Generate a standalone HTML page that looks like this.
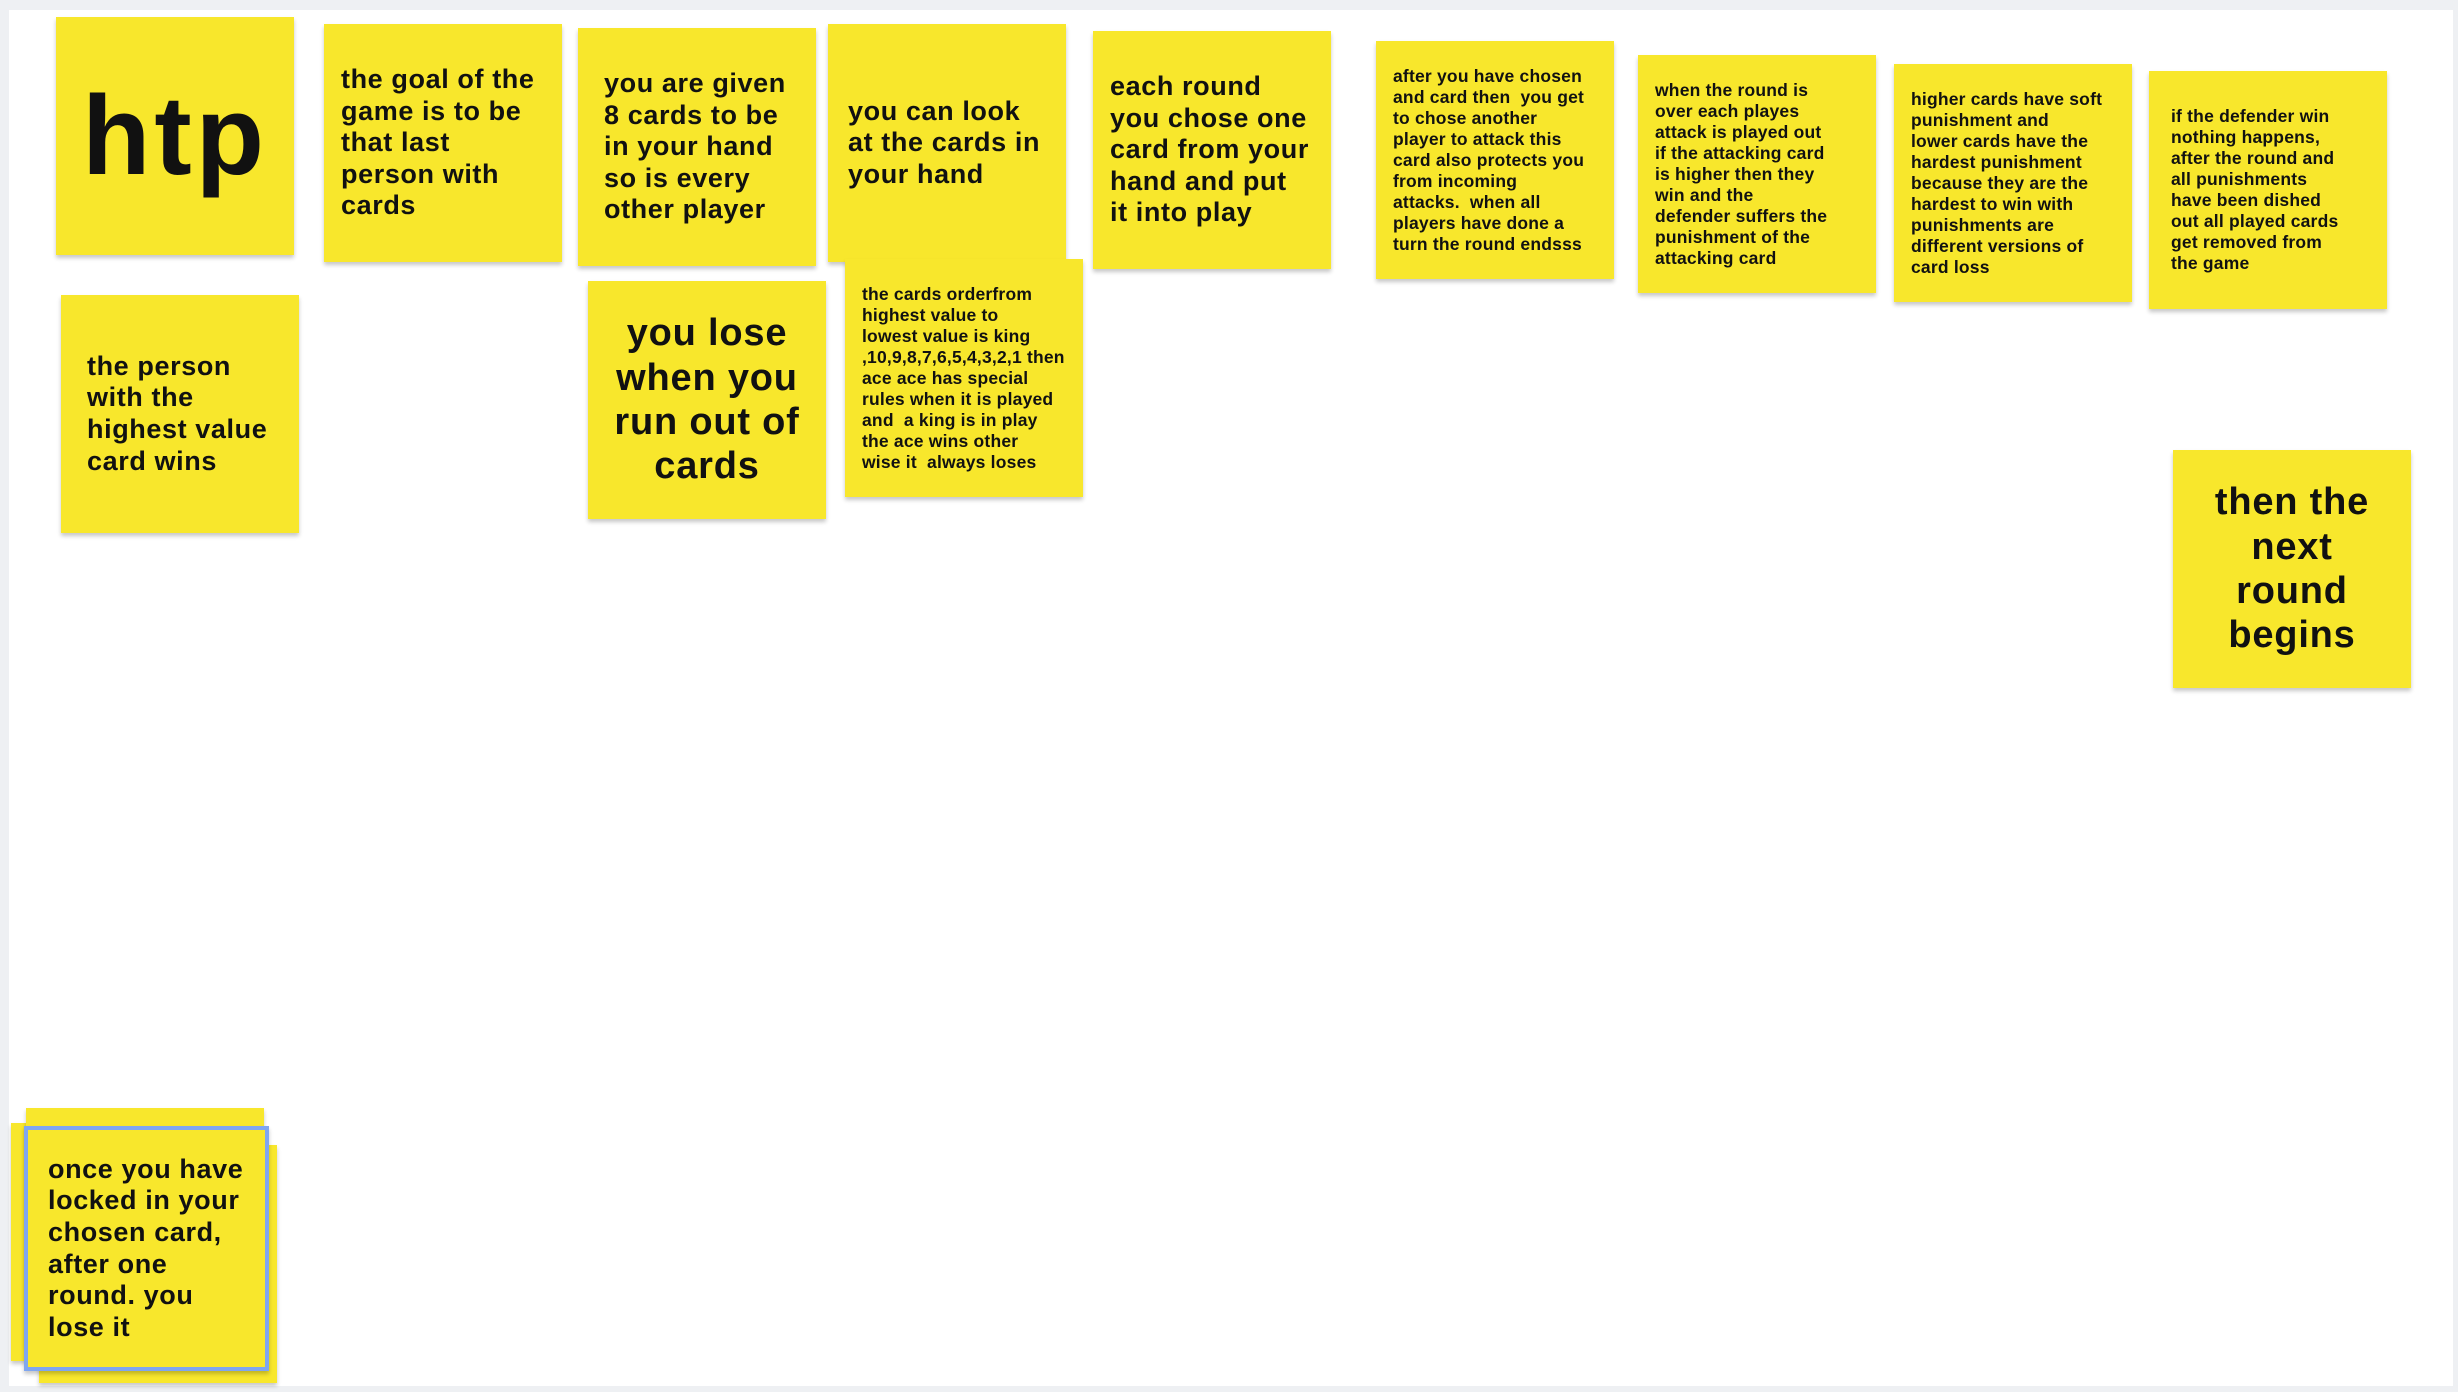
<!DOCTYPE html>
<html><head><meta charset="utf-8"><style>
html,body{margin:0;padding:0}
body{width:2458px;height:1392px;background:#eef0f3;position:relative;overflow:hidden;font-family:"Liberation Sans",sans-serif;}
.canvas{position:absolute;left:9px;top:10px;width:2444px;height:1376px;background:#fff;}
.n{position:absolute;width:238px;height:238px;background:#f8e72c;box-shadow:0 3px 4px rgba(0,0,0,0.22);display:flex;align-items:center;box-sizing:border-box;padding:0 17px;font-weight:bold;color:#111;line-height:1.17;white-space:nowrap;}
.m{font-size:27px;letter-spacing:0.6px}
.s{font-size:17.5px;line-height:1.2;letter-spacing:0.2px}
.c{justify-content:center;text-align:center;font-size:38px;line-height:1.17;letter-spacing:0.8px}
</style></head><body>
<div class="canvas"></div>
<div class="n c" style="left:56px;top:17px;font-size:112px;letter-spacing:4px">htp</div>
<div class="n m" style="left:324px;top:24px;">the goal of the<br>game is to be<br>that last<br>person with<br>cards</div>
<div class="n m" style="left:578px;top:28px;padding-left:26px">you are given<br>8 cards to be<br>in your hand<br>so is every<br>other player</div>
<div class="n m" style="left:828px;top:24px;padding-left:20px">you can look<br>at the cards in<br>your hand</div>
<div class="n m" style="left:1093px;top:31px;">each round<br>you chose one<br>card from your<br>hand and put<br>it into play</div>
<div class="n s" style="left:1376px;top:41px;">after you have chosen<br>and card then &nbsp;you get<br>to chose another<br>player to attack this<br>card also protects you<br>from incoming<br>attacks. &nbsp;when all<br>players have done a<br>turn the round endsss</div>
<div class="n s" style="left:1638px;top:55px;">when the round is<br>over each playes<br>attack is played out<br>if the attacking card<br>is higher then they<br>win and the<br>defender suffers the<br>punishment of the<br>attacking card</div>
<div class="n s" style="left:1894px;top:64px;">higher cards have soft<br>punishment and<br>lower cards have the<br>hardest punishment<br>because they are the<br>hardest to win with<br>punishments are<br>different versions of<br>card loss</div>
<div class="n s" style="left:2149px;top:71px;padding-left:22px">if the defender win<br>nothing happens,<br>after the round and<br>all punishments<br>have been dished<br>out all played cards<br>get removed from<br>the game</div>
<div class="n m" style="left:61px;top:295px;padding-left:26px">the person<br>with the<br>highest value<br>card wins</div>
<div class="n c" style="left:588px;top:281px;">you lose<br>when you<br>run out of<br>cards</div>
<div class="n s" style="left:845px;top:259px;">the cards orderfrom<br>highest value to<br>lowest value is king<br>,10,9,8,7,6,5,4,3,2,1 then<br>ace ace has special<br>rules when it is played<br>and &nbsp;a king is in play<br>the ace wins other<br>wise it &nbsp;always loses</div>
<div class="n c" style="left:2173px;top:450px;">then the<br>next<br>round<br>begins</div>
<div class="n" style="left:11px;top:1123px;"></div>
<div class="n" style="left:39px;top:1145px;"></div>
<div class="n" style="left:26px;top:1108px;"></div>
<div class="n m" style="left:24px;top:1126px;width:245px;height:245px;border:4px solid #7fa6f0;padding-left:20px;">once you have<br>locked in your<br>chosen card,<br>after one<br>round. you<br>lose it</div>
</body></html>
